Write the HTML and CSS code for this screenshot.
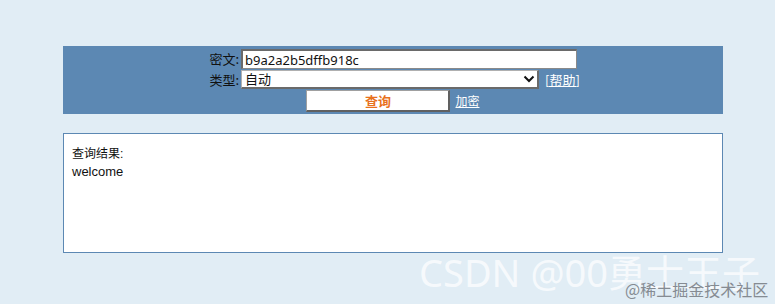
FILE: index.html
```html
<!DOCTYPE html>
<html lang="zh-CN">
<head>
<meta charset="utf-8">
<title>MD5 查询</title>
<link rel="stylesheet" href="styles.css">
</head>
<body>
<div class="page">
  <form class="panel">
    <div class="grid">
      <label class="lbl">密文:</label>
      <div class="field"><input class="txt" type="text" value="b9a2a2b5dffb918c"></div>
      <label class="lbl">类型:</label>
      <div class="field row">
        <div class="selwrap">
          <select class="sel"><option>自动</option></select>
          <svg class="chev" width="12" height="8" viewBox="0 0 12 8"><path d="M1.5 1.5 L6 6 L10.5 1.5" fill="none" stroke="#111" stroke-width="2"/></svg>
        </div>
        <a class="lnk help" href="#">[帮助]</a>
      </div>
      <div class="actions">
        <button class="btn" type="button">查询</button>
        <a class="lnk" href="#">加密</a>
      </div>
    </div>
  </form>
  <div class="result">
    <div>查询结果:</div>
    <div class="res">welcome</div>
  </div>
</div>
<div class="wm">CSDN @00勇士王子</div>
<div class="wm2">@稀土掘金技术社区</div>
</body>
</html>
```
FILE: styles.css
```css
html, body {
  margin: 0;
  padding: 0;
}
body {
  width: 775px;
  height: 304px;
  overflow: hidden;
  position: relative;
  background: #e1edf5;
  font-family: "Liberation Sans", "Noto Sans CJK SC", sans-serif;
  font-size: 13px;
  color: #000;
}
.page {
  padding: 46px 0 0 63px;
  width: 660px;
}
.panel {
  margin: 0;
  background: #5c88b3;
  height: 68px;
  box-sizing: border-box;
  padding-top: 3px;
  display: flex;
  justify-content: center;
}
.grid {
  display: grid;
  grid-template-columns: 32px 338px;
  column-gap: 2px;
  align-content: start;
}
.lbl {
  text-align: right;
  line-height: 20px;
  font-family: "Noto Sans CJK SC", sans-serif;
  font-size: 13px;
  color: #111;
  white-space: nowrap;
}
.field {
  height: 20px;
  display: flex;
  align-items: center;
}
.field:first-of-type {
  margin-bottom: 1px;
}
.row {
  gap: 6px;
  height: 19px;
}
.txt {
  box-sizing: border-box;
  width: 336px;
  height: 20px;
  margin: 0;
  padding: 0 2px;
  border: 1px solid #8a8a8a;
  border-top: 2px solid #6a6a6a;
  border-left: 2px solid #6a6a6a;
  background: #fff;
  font-family: "Noto Sans", "Noto Sans CJK SC", sans-serif;
  font-size: 13px;
  color: #111;
  outline: none;
}
.selwrap {
  position: relative;
  width: 298px;
  height: 19px;
}
.sel {
  appearance: none;
  -webkit-appearance: none;
  box-sizing: border-box;
  width: 298px;
  height: 19px;
  margin: 0;
  padding: 0 0 0 3px;
  border: 1px solid #b0b0b0;
  border-right: 2px solid #6a6a6a;
  border-bottom: 2px solid #6a6a6a;
  border-radius: 0;
  background: #fff;
  font-family: "Noto Sans CJK SC", sans-serif;
  font-size: 13px;
  line-height: 16px;
  color: #111;
}
.chev {
  position: absolute;
  right: 4px;
  top: 5px;
}
.lnk {
  color: #fff;
  text-decoration: underline;
  font-family: "Noto Sans CJK SC", sans-serif;
  font-size: 12px;
  line-height: 16px;
  white-space: nowrap;
}
.help {
  font-size: 13px;
}
.actions {
  grid-column: 1 / 3;
  display: flex;
  justify-content: center;
  align-items: center;
  gap: 5px;
  height: 22px;
}
.btn {
  box-sizing: border-box;
  width: 144px;
  height: 22px;
  margin: 0;
  padding: 0;
  background: #fff;
  border: 1px solid #a0a0a0;
  border-right: 2px solid #606060;
  border-bottom: 2px solid #606060;
  color: #e8711c;
  font-family: "Noto Sans CJK SC", sans-serif;
  font-weight: bold;
  font-size: 13px;
  line-height: 18px;
}
.result {
  margin-top: 19px;
  height: 120px;
  box-sizing: border-box;
  background: #fff;
  border: 1px solid #5c88b3;
  padding: 11px 8px;
  line-height: 18px;
  font-family: "Liberation Sans", "Noto Sans CJK SC", sans-serif;
  font-size: 12px;
  color: #111;
}
.res {
  font-size: 13px;
}
.wm {
  position: absolute;
  left: 419px;
  top: 253px;
  font-family: "Noto Sans", "Noto Sans CJK SC", sans-serif;
  font-size: 38px;
  line-height: 1;
  color: rgba(255, 255, 255, 0.72);
  white-space: nowrap;
}
.wm2 {
  position: absolute;
  left: 625px;
  top: 281px;
  font-family: "Noto Sans CJK SC", sans-serif;
  font-size: 16px;
  line-height: 16px;
  color: #858b92;
  white-space: nowrap;
}
```
